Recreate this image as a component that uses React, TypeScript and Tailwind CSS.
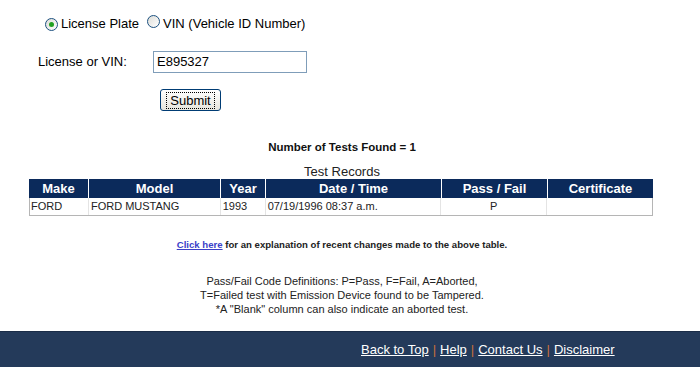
import React from "react";

const font = { fontFamily: '"Liberation Sans", Arial, sans-serif' };

function Radio({ checked }: { checked?: boolean }) {
  return (
    <span className="inline-flex h-[13px] w-[13px] items-center justify-center rounded-full border border-[#1c5180] bg-gradient-to-br from-[#dcdcd7] to-white">
      {checked && <span className="h-[5px] w-[5px] rounded-full bg-[#21a121]" />}
    </span>
  );
}

export default function App() {
  const cols = [
    { label: "Make", w: "w-[59px]" },
    { label: "Model", w: "w-[132px]" },
    { label: "Year", w: "w-[45px]" },
    { label: "Date / Time", w: "w-[176px]" },
    { label: "Pass / Fail", w: "w-[106px]" },
    { label: "Certificate", w: "w-[106px]" },
  ];
  const row = ["FORD", "FORD MUSTANG", "1993", "07/19/1996 08:37 a.m.", "P", ""];

  return (
    <div className="flex h-[367px] w-[700px] flex-col bg-white text-black" style={font}>
      <div className="flex-1">
        {/* search form */}
        <div className="flex h-[20px] items-center pl-[45px] mt-[14px] text-[13px]">
          <Radio checked />
          <span className="ml-[3px]">License Plate</span>
          <span className="ml-[8px]">
            <Radio />
          </span>
          <span className="ml-[3px]">VIN (Vehicle ID Number)</span>
        </div>
        <div className="mt-[17px] flex items-center pl-[38px] text-[13px]">
          <span className="w-[115px]">License or VIN:</span>
          <div className="flex h-[22px] w-[154px] items-center border border-[#7f9db9] pl-[3px]">
            E895327
          </div>
        </div>
        <div className="mt-[16px] pl-[160px]">
          <button className="flex h-[22px] w-[61px] items-center justify-center rounded-[3px] border border-[#003c74] bg-gradient-to-b from-white to-[#e6e5dd] text-[13px]">
            <span className="border border-dotted border-black px-[3px] leading-[15px]">Submit</span>
          </button>
        </div>

        {/* results */}
        <div className="w-[684px]">
          <div className="mt-[29px] text-center text-[11.5px] font-bold leading-[14px] text-[#111]">
            Number of Tests Found = 1
          </div>
          <div className="mt-[10px] text-center text-[13px] leading-[15px] text-[#222]">Test Records</div>
          <div className="ml-[29px] w-[624px]">
            <div className="flex h-[19px] bg-[#0b2a5b] text-[13px] font-bold text-white">
              {cols.map((c, i) => (
                <div
                  key={c.label}
                  className={`${c.w} flex items-center justify-center ${i > 0 ? "border-l border-white" : ""}`}
                >
                  {c.label}
                </div>
              ))}
            </div>
            <div className="flex h-[18px] border border-t-0 border-[#b5b5b5] text-[11px] text-[#222]">
              {row.map((v, i) => (
                <div
                  key={i}
                  className={`${cols[i].w} flex items-center ${i === 4 ? "justify-center" : "pl-[2px]"} ${
                    i > 0 ? "border-l border-[#e4e4e4]" : "-ml-px"
                  }`}
                >
                  {v}
                </div>
              ))}
            </div>
          </div>

          <div className="mt-[22px] text-center text-[9.6px] font-bold leading-[13px] text-[#222]">
            <a href="#" className="text-[#3b40c8] underline">
              Click here
            </a>{" "}
            for an explanation of recent changes made to the above table.
          </div>

          <div className="mt-[23px] text-center text-[11px] leading-[14px] text-[#222]">
            <div>Pass/Fail Code Definitions: P=Pass, F=Fail, A=Aborted,</div>
            <div>T=Failed test with Emission Device found to be Tampered.</div>
            <div>*A "Blank" column can also indicate an aborted test.</div>
          </div>
        </div>
      </div>

      {/* footer */}
      <div className="flex h-[36px] items-center border-t border-[#1a2c47] bg-[#243a5a] pl-[361px] text-[13px] text-white">
        <a href="#" className="underline">Back to Top</a>
        <span className="mx-[4px] text-[#c8703a]">|</span>
        <a href="#" className="underline">Help</a>
        <span className="mx-[4px] text-[#c8703a]">|</span>
        <a href="#" className="underline">Contact Us</a>
        <span className="mx-[4px] text-[#c8703a]">|</span>
        <a href="#" className="underline">Disclaimer</a>
      </div>
    </div>
  );
}
